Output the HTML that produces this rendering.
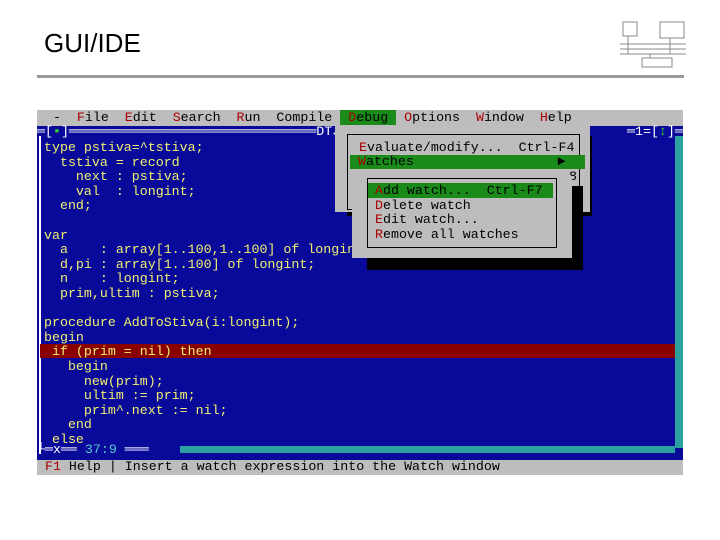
<!DOCTYPE html>
<html><head><meta charset="utf-8"><style>
body{margin:0;width:720px;height:540px;background:#fff;position:relative;overflow:hidden;font-family:"Liberation Mono",monospace}
.t{position:absolute;left:44px;top:28px;font:26px "Liberation Sans",sans-serif;color:#000}
.rule{position:absolute;left:37px;top:75px;width:647px;height:3px;background:#999}
.scr{position:absolute;left:37px;top:110px;width:646px;height:365px;background:#0a0a9a;overflow:hidden}
.a{position:absolute;white-space:pre;font-size:13.3px;line-height:14.6px}
.y{color:#f0f070}
.g{background:#bdbdbd}
</style></head><body>
<div class="t">GUI/IDE</div>
<div class="rule"></div>
<svg style="position:absolute;left:620px;top:18px" width="66" height="50"><g stroke="#888" fill="none" stroke-width="1"><rect x="3" y="4" width="14" height="14"/><rect x="40" y="4" width="24" height="16"/><line x1="0" y1="26" x2="66" y2="26"/><line x1="0" y1="31" x2="66" y2="31"/><line x1="0" y1="36" x2="66" y2="36"/><rect x="22" y="40" width="30" height="9"/><line x1="8" y1="18" x2="8" y2="36"/><line x1="50" y1="20" x2="50" y2="36"/><line x1="30" y1="36" x2="30" y2="40"/></g></svg>
<div class="scr">
<div class="a g" style="left:0;top:0;width:646px;height:16px;color:#000;line-height:16px">  -  <span style="color:#a00">F</span>ile  <span style="color:#a00">E</span>dit  <span style="color:#a00">S</span>earch  <span style="color:#a00">R</span>un  Compile <span style="background:#1a8a1a"><span style="color:#a00"> D</span>ebug </span> <span style="color:#a00">O</span>ptions  <span style="color:#a00">W</span>indow  <span style="color:#a00">H</span>elp</div>
<div class="a" style="left:0;top:15px;color:#fff">═[<span style="color:#3c3">▪</span>]═══════════════════════════════DTJ</div>
<div class="a" style="left:590px;top:15px;color:#fff">═1=[<span style="color:#3c3">↕</span>]═</div>
<div style="position:absolute;left:2px;top:26px;width:2px;height:318px;background:#fff"></div>
<div style="position:absolute;left:638px;top:26px;width:8px;height:312px;background:#2aa0a0"></div>
<div style="position:absolute;left:3px;top:234px;width:635px;height:14px;background:#8a0000"></div>
<div class="a y" style="left:7px;top:31px">type pstiva=^tstiva;
  tstiva = record
    next : pstiva;
    val  : longint;
  end;

var
  a    : array[1..100,1..100] of longint;
  d,pi : array[1..100] of longint;
  n    : longint;
  prim,ultim : pstiva;

procedure AddToStiva(i:longint);
begin
 if (prim = nil) then
   begin
     new(prim);
     ultim := prim;
     prim^.next := nil;
   end
 else</div>
<div class="a" style="left:0;top:333px;color:#fff">└═x══ <span style="color:#5cc">37:9</span> ═══</div>
<div style="position:absolute;left:143px;top:336px;width:495px;height:7px;background:#2aa0a0"></div>
<div class="a g" style="left:0;top:350px;width:646px;height:15px;color:#000"><span style="color:#a00"> F1</span> Help | Insert a watch expression into the Watch window</div>
<div style="position:absolute;left:310px;top:26px;width:245px;height:80px;background:#000"></div>
<div class="g" style="position:absolute;left:298px;top:16px;width:255px;height:86px"></div>
<div style="position:absolute;left:310px;top:24px;width:231px;height:74px;border:1px solid #000"></div>
<div class="a" style="left:322px;top:31px;color:#000"><span style="color:#a00">E</span>valuate/modify...  Ctrl-F4</div>
<div class="a" style="left:313px;top:45px;width:235px;height:14px;background:#1a8a1a;color:#000"> <span style="color:#a00">W</span>atches                  ►</div>
<div class="a" style="left:532px;top:60px;color:#000">8</div>
<div style="position:absolute;left:330px;top:76px;width:216px;height:84px;background:#000"></div>
<div class="g" style="position:absolute;left:315px;top:66px;width:220px;height:82px"></div>
<div style="position:absolute;left:330px;top:68px;width:188px;height:68px;border:1px solid #000"></div>
<div class="a" style="left:331px;top:73px;width:185px;height:15px;background:#1a8a1a"></div>
<div class="a" style="left:338px;top:74px;color:#000"><span style="color:#a00">A</span>dd watch...  Ctrl-F7
<span style="color:#a00">D</span>elete watch
<span style="color:#a00">E</span>dit watch...
<span style="color:#a00">R</span>emove all watches</div>
</div>
</body></html>
